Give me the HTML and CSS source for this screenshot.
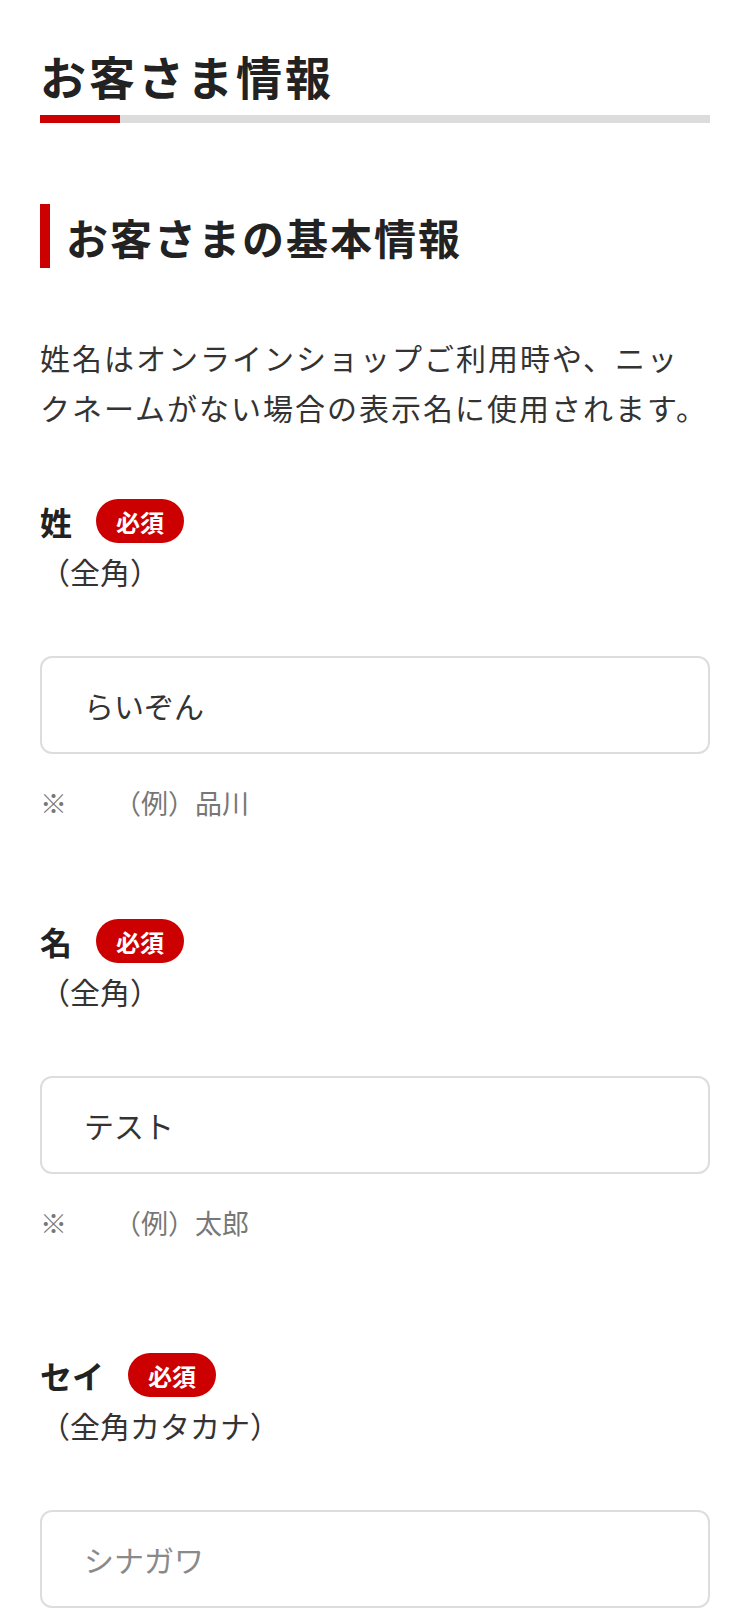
FILE: index.html
```html
<!DOCTYPE html>
<html lang="ja">
<head>
<meta charset="utf-8">
<title>お客さま情報</title>
<link rel="stylesheet" href="styles.css">
</head>
<body>
<main class="page">
  <h1 class="page-title">お客さま情報</h1>
  <div class="title-bar"><span class="title-bar-accent"></span></div>

  <h2 class="section-heading">お客さまの基本情報</h2>

  <p class="lead">姓名はオンラインショップご利用時や、ニッ<br>クネームがない場合の表示名に使用されます。</p>

  <div class="field">
    <div class="field-label-row">
      <span class="field-label">姓</span>
      <span class="badge">必須</span>
    </div>
    <div class="field-sub">（全角）</div>
    <div class="input-box"><span class="input-value">らいぞん</span></div>
    <div class="hint"><span class="hint-mark">※</span><span class="hint-text">（例）品川</span></div>
  </div>

  <div class="field">
    <div class="field-label-row">
      <span class="field-label">名</span>
      <span class="badge">必須</span>
    </div>
    <div class="field-sub">（全角）</div>
    <div class="input-box"><span class="input-value">テスト</span></div>
    <div class="hint"><span class="hint-mark">※</span><span class="hint-text">（例）太郎</span></div>
  </div>

  <div class="field field-kana">
    <div class="field-label-row">
      <span class="field-label">セイ</span>
      <span class="badge">必須</span>
    </div>
    <div class="field-sub">（全角カタカナ）</div>
    <div class="input-box"><span class="input-placeholder">シナガワ</span></div>
  </div>
</main>
</body>
</html>
```

FILE: styles.css
```css
html, body {
  margin: 0;
  padding: 0;
  background: #fff;
}

body {
  font-family: "Noto Sans CJK JP", "Noto Sans", sans-serif;
  color: #333;
}

.page {
  padding: 45px 40px 0;
}

.page-title {
  margin: 0;
  font-size: 46px;
  line-height: 60px;
  font-weight: 700;
  letter-spacing: 3px;
  color: #222;
}

.title-bar {
  margin-top: 10px;
  height: 8px;
  background: #dcdcdc;
  display: flex;
}

.title-bar-accent {
  width: 80px;
  background: #cc0000;
}

.section-heading {
  margin: 81px 0 0;
  height: 64px;
  display: flex;
  align-items: center;
  border-left: 10px solid #cc0000;
  padding-left: 16px;
  font-size: 42px;
  font-weight: 700;
  letter-spacing: 2px;
  color: #222;
}

.lead {
  margin: 64px 0 0;
  font-size: 30px;
  line-height: 50px;
  letter-spacing: 2px;
  color: #333;
}

.field {
  margin-top: 67px;
}

.field + .field {
  margin-top: 96px;
}

.field + .field.field-kana {
  margin-top: 110px;
}

.field-label-row {
  display: flex;
  align-items: center;
  gap: 24px;
  height: 44px;
}

.field-label {
  font-size: 32px;
  font-weight: 700;
  color: #222;
}

.badge {
  display: inline-flex;
  align-items: center;
  justify-content: center;
  height: 44px;
  padding: 0 20px;
  border-radius: 22px;
  background: #cc0000;
  color: #fff;
  font-size: 24px;
  font-weight: 700;
}

.field-sub {
  margin-top: 8px;
  font-size: 30px;
  line-height: 40px;
  color: #333;
}

.input-box {
  margin-top: 65px;
  height: 98px;
  box-sizing: border-box;
  border: 2px solid #dddddd;
  border-radius: 12px;
  display: flex;
  align-items: center;
  padding-left: 42px;
  font-size: 30px;
}

.input-value {
  color: #333;
}

.input-placeholder {
  color: #8a8a8a;
}

.hint {
  margin-top: 29px;
  display: flex;
  align-items: center;
  font-size: 27px;
  line-height: 40px;
  color: #777;
}

.hint-mark {
  width: 74px;
}
```
